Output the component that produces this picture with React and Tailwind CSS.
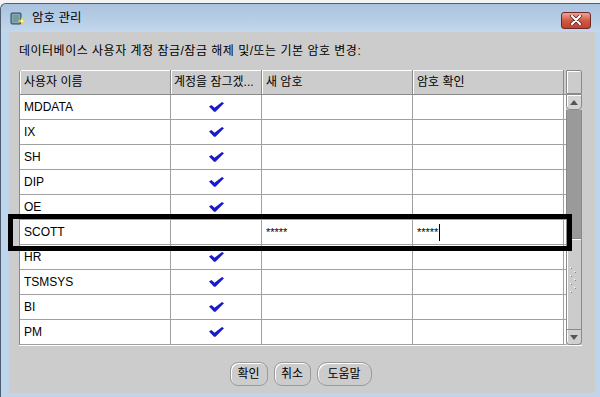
import React from "react";

const FONT = { fontFamily: '"Liberation Sans", "Noto Sans CJK KR", sans-serif' };

function Check() {
  return (
    <svg width="15" height="10" viewBox="0 0 15 10">
      <polygon points="0,4.5 2.5,3 5.5,5.8 13,0 15,1.2 6.5,9.8 5,9.8" fill="#1a1acc" />
    </svg>
  );
}

const rows = [
  ["MDDATA", true],
  ["IX", true],
  ["SH", true],
  ["DIP", true],
  ["OE", true],
  ["SCOTT", false],
  ["HR", true],
  ["TSMSYS", true],
  ["BI", true],
  ["PM", true],
];

function AppIcon() {
  return (
    <svg width="16" height="16" viewBox="0 0 16 16">
      <rect x="1" y="3" width="10" height="11" rx="1" fill="#6b8fa8" stroke="#2f4d63" strokeWidth="1" />
      <rect x="2.5" y="4.5" width="7" height="8" fill="#a8c8c0" />
      <line x1="4" y1="5" x2="4" y2="12" stroke="#3b6e78" />
      <line x1="6" y1="5" x2="6" y2="12" stroke="#3b6e78" />
      <line x1="8" y1="5" x2="8" y2="12" stroke="#3b6e78" />
      <polygon points="12,7 13,10 16,11 13,12 12,15 11,12 8,11 11,10" fill="#fff6a0" stroke="#e0c020" strokeWidth="0.5" />
    </svg>
  );
}

function Grip() {
  return (
    <svg width="10" height="28" viewBox="0 0 10 28">
      {[0, 4, 8, 12, 16, 20, 24].map((y, i) => (
        <g key={i}>
          <rect x={i % 2 === 0 ? 1 : 5} y={y} width="1" height="1" fill="#ffffff" />
          <rect x={i % 2 === 0 ? 2 : 6} y={y + 1} width="1" height="1" fill="#888888" />
        </g>
      ))}
    </svg>
  );
}

export default function App() {
  return (
    <div className="relative w-[600px] h-[397px] overflow-hidden bg-[#f0f0f0]" style={FONT}>
      <div className="h-[3px] bg-[#f4f4f4]" />
      <div className="flex flex-col w-[600px] h-[394px] rounded-tl-[6px] border-l border-t border-[#4e5d70] bg-[#bfd5ec]">
        {/* title bar */}
        <div className="h-[28px] flex items-center rounded-tl-[6px] bg-gradient-to-b from-[#a9c2de] to-[#c3d7ec] pl-[9px] pr-[9px]">
          <AppIcon />
          <span className="ml-[6px] text-[12.5px] text-black leading-none">암호 관리</span>
          <div className="flex-1" />
          <div className="w-[30px] h-[17px] mt-[4px] rounded-[3px] border border-[#6e2a2a] bg-gradient-to-b from-[#e9a495] via-[#d15a44] to-[#c0412c] flex items-center justify-center">
            <svg width="12" height="10" viewBox="0 0 12 10">
              <path d="M2 1 L10 9 M10 1 L2 9" stroke="#4a2020" strokeWidth="3.6" strokeLinecap="round" />
              <path d="M2 1 L10 9 M10 1 L2 9" stroke="#ffffff" strokeWidth="2.2" strokeLinecap="round" />
            </svg>
          </div>
        </div>
        {/* body with frame */}
        <div className="flex flex-1 pl-[8px]">
          <div className="w-[586px] h-[361px] bg-[#cccccc] flex flex-col pl-[10px]">
            <div className="h-[38px] flex items-center text-[12px] tracking-[0.5px] text-black">
              데이터베이스 사용자 계정 잠금/잠금 해제 및/또는 기본 암호 변경:
            </div>
            {/* table */}
            <div className="flex w-[563px]">
              <div className="w-[547px] border-l border-[#8a8a8a] rounded-tl-[3px] overflow-hidden">
                {/* header */}
                <div className="flex h-[25px] border-b border-[#8a8a8a] text-[12px] text-black">
                  <div className="w-[151px] border-r border-[#8a8a8a] shadow-[inset_1px_1px_0_#ffffff] flex items-center pl-[4px]">사용자 이름</div>
                  <div className="w-[91px] border-r border-[#8a8a8a] shadow-[inset_1px_1px_0_#ffffff] flex items-center pl-[3px] whitespace-nowrap overflow-hidden">계정을 잠그겠...</div>
                  <div className="w-[151px] border-r border-[#8a8a8a] shadow-[inset_1px_1px_0_#ffffff] flex items-center pl-[4px]">새 암호</div>
                  <div className="w-[151px] border-r border-[#8a8a8a] shadow-[inset_1px_1px_0_#ffffff] flex items-center pl-[4px]">암호 확인</div>
                </div>
                {rows.map(([name, checked]) => (
                  <div key={name} className="flex h-[25px] bg-white border-b border-[#a0a0a0] text-[12px] text-black">
                    <div className="w-[151px] border-r border-[#a0a0a0] flex items-center pl-[4px]">{name}</div>
                    <div className="w-[91px] border-r border-[#a0a0a0] flex items-center justify-center">
                      {checked ? <Check /> : null}
                    </div>
                    <div className="w-[151px] border-r border-[#a0a0a0] flex items-center pl-[4px] text-[11px]">
                      {name === "SCOTT" ? "*****" : ""}
                    </div>
                    <div className="w-[151px] border-r border-[#a0a0a0] flex items-center pl-[4px] text-[11px]">
                      {name === "SCOTT" ? (
                        <>
                          <span>*****</span>
                          <span className="ml-[1px] w-px h-[17px] bg-black" />
                        </>
                      ) : null}
                    </div>
                  </div>
                ))}
              </div>
              {/* scrollbar */}
              <div className="w-[16px] flex flex-col">
                <div className="h-[24px] border border-[#8a8a8a] shadow-[inset_1px_1px_0_#ffffff] rounded-tr-[2px] bg-[#cccccc]" />
                <div className="h-[16px] border border-[#8a8a8a] rounded-b-[4px] bg-[#d4d4d4] shadow-[inset_1px_1px_0_#ffffff] flex items-center justify-center">
                  <svg width="8" height="5" viewBox="0 0 8 5"><polygon points="0,5 8,5 4,0" fill="#555" /></svg>
                </div>
                <div className="h-[128px] bg-[#9a9a9a] border-x border-[#8a8a8a]" />
                <div className="h-[92px] bg-[#cccccc] border border-[#8a8a8a] shadow-[inset_1px_1px_0_#ffffff] flex items-start justify-center pt-[28px]">
                  <Grip />
                </div>
                <div className="h-[15px] border border-t-0 border-[#8a8a8a] rounded-b-[4px] bg-[#d0d0d0] flex items-center justify-center shadow-[inset_1px_0_0_#ffffff]">
                  <svg width="8" height="5" viewBox="0 0 8 5"><polygon points="0,0 8,0 4,5" fill="#555" /></svg>
                </div>
              </div>
            </div>
            <div className="w-[563px] h-px bg-white" />
            {/* buttons */}
            <div className="flex justify-center gap-[6px] pt-[16px] pr-[13px] text-[12px] text-black">
              <button className="w-[38px] h-[24px] rounded-[8px] border border-[#9a9a9a] shadow-[inset_1px_1px_0_#ffffff] bg-[#cccccc]">확인</button>
              <button className="w-[37px] h-[24px] rounded-[8px] border border-[#9a9a9a] shadow-[inset_1px_1px_0_#ffffff] bg-[#cccccc]">취소</button>
              <button className="w-[55px] h-[24px] rounded-[10px] border border-[#9a9a9a] shadow-[inset_1px_1px_0_#ffffff] bg-[#cccccc]">도움말</button>
            </div>
          </div>
        </div>
      </div>
      {/* annotation highlight */}
      <div className="absolute left-[8px] top-[214px] w-[564px] h-[37px] border-[5px] border-black" />
    </div>
  );
}
